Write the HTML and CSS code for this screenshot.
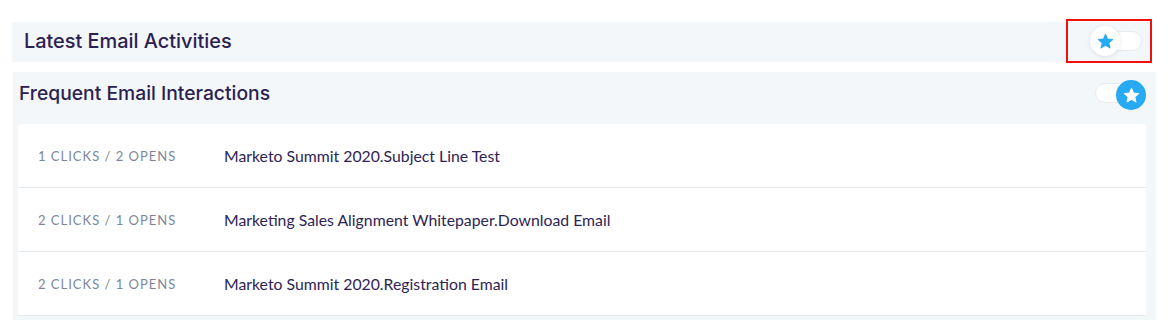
FILE: index.html
```html
<!DOCTYPE html>
<html lang="en">
<head>
    <meta charset="UTF-8">
    <meta name="viewport" content="width=device-width, initial-scale=1.0">
    <title>Email Activities</title>
    <link rel="stylesheet" href="styles.css">
</head>
<body>

    <div class="bar">
        <h2 class="bar-title">Latest Email Activities</h2>
        <div class="highlight">
            <div class="toggle">
                <span class="track"></span>
                <span class="knob">
                    <svg viewBox="0 0 24 24" width="17" height="17"><polygon points="12,2 14.9,8.6 22,9.3 16.6,14 18.2,21 12,17.3 5.8,21 7.4,14 2,9.3 9.1,8.6" fill="#27a9f4" stroke="#27a9f4" stroke-width="1.5" stroke-linejoin="round"/></svg>
                </span>
            </div>
        </div>
    </div>

    <div class="panel">
        <div class="panel-head">
            <h2 class="panel-title">Frequent Email Interactions</h2>
            <div class="toggle on">
                <span class="track"></span>
                <span class="knob">
                    <svg viewBox="0 0 24 24" width="17" height="17"><polygon points="12,2 14.9,8.6 22,9.3 16.6,14 18.2,21 12,17.3 5.8,21 7.4,14 2,9.3 9.1,8.6" fill="#fff" stroke="#fff" stroke-width="1.5" stroke-linejoin="round"/></svg>
                </span>
            </div>
        </div>

        <div class="card">
            <div class="row">
                <span class="stats">1 Clicks / 2 Opens</span>
                <span class="name">Marketo Summit 2020.Subject Line Test</span>
            </div>
            <div class="row">
                <span class="stats">2 Clicks / 1 Opens</span>
                <span class="name">Marketing Sales Alignment Whitepaper.Download Email</span>
            </div>
            <div class="row">
                <span class="stats">2 Clicks / 1 Opens</span>
                <span class="name">Marketo Summit 2020.Registration Email</span>
            </div>
        </div>
    </div>

</body>
</html>
```

FILE: styles.css
```css
body {
    margin: 0;
    background-color: #fff;
    font-family: Lato, "Open Sans", sans-serif;
    color: #2b2150;
}
h2 {
    margin: 0;
    font-family: Inter, Lato, sans-serif;
    font-size: 18px;
    font-weight: 500;
    color: #2b2150;
}
.bar {
    position: relative;
    display: flex;
    align-items: center;
    justify-content: space-between;
    height: 40px;
    margin: 22px 26px 10px 12px;
    padding-left: 12px;
    background-color: #f4f7fa;
}
.bar-title {
    margin-top: -2px;
    font-size: 19.9px;
}
.highlight {
    position: absolute;
    top: -3px;
    right: -2px;
    width: 60px;
    height: 40px;
    padding-left: 22px;
    border: 2px solid #f01010;
    display: flex;
    align-items: center;
}
.toggle {
    position: relative;
    width: 52px;
    height: 30px;
}
.track {
    position: absolute;
    left: 8px;
    top: 5px;
    width: 42px;
    height: 18px;
    border: 1px solid #e8ecf0;
    border-radius: 10px;
    background-color: #fff;
}
.knob {
    position: absolute;
    left: 0;
    top: 0;
    width: 30px;
    height: 30px;
    border-radius: 50%;
    background-color: #fff;
    box-shadow: 0 1px 4px rgba(40, 60, 90, 0.12);
    display: flex;
    align-items: center;
    justify-content: center;
}
.toggle.on .track {
    left: 0;
    width: 34px;
}
.toggle.on .knob {
    left: 21px;
    top: 2px;
    background-color: #27a9f4;
    box-shadow: none;
}
.panel {
    width: 1128px;
    margin-left: 13px;
    padding: 0 10px 4px 5px;
    background-color: #f4f7fa;
}
.panel-head {
    display: flex;
    align-items: center;
    justify-content: space-between;
    height: 42px;
    padding: 0 0 10px 1px;
}
.panel-head .toggle {
    margin-right: -1px;
}
.panel-title {
    font-size: 19.3px;
}
.card {
    background-color: #fff;
    border-radius: 4px 4px 0 0;
}
.row {
    display: flex;
    align-items: center;
    height: 63px;
    padding-left: 20px;
    border-bottom: 1px solid #e6ebf1;
}
.stats {
    width: 186px;
    font-size: 13px;
    letter-spacing: 1px;
    text-transform: uppercase;
    color: #7a8799;
}
.name {
    font-size: 15.8px;
    color: #2e2454;
}
```
